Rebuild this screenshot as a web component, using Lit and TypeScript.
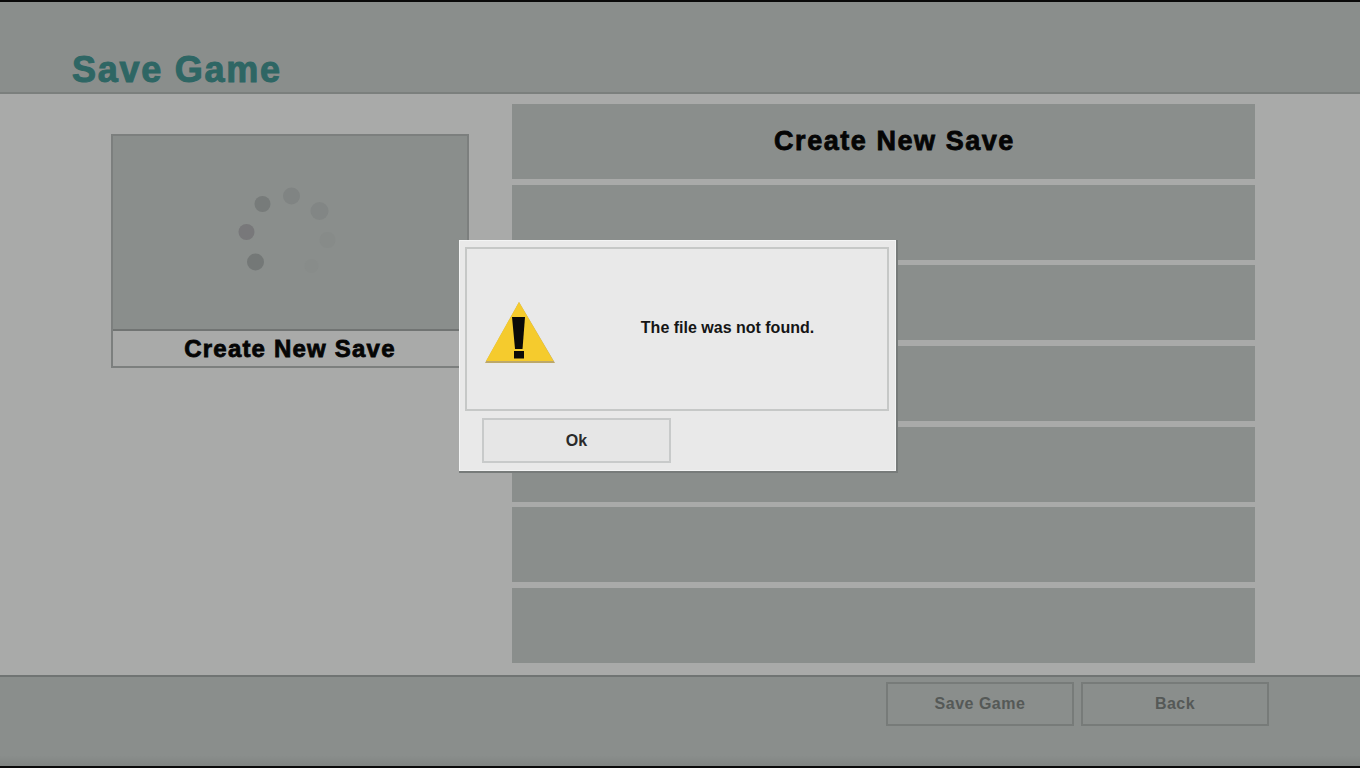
import { LitElement, html, svg, css } from "lit";
import { customElement } from "lit/decorators.js";

@customElement("app-root")
export class AppRoot extends LitElement {
  static styles = css`
    :host {
      display: block;
      width: 1360px;
      height: 768px;
      position: relative;
      overflow: hidden;
      font-family: "Liberation Sans", Arial, sans-serif;
      background: #a9aaa9;
    }
    .screen {
      display: flex;
      flex-direction: column;
      height: 768px;
      box-sizing: border-box;
      border-top: 2px solid #0a0a0a;
      border-bottom: 2px solid #0a0a0a;
    }
    .head {
      height: 92px;
      flex: none;
      box-sizing: border-box;
      background: #8a8e8c;
      border-bottom: 2px solid #7b7f7d;
      padding: 48px 0 0 72px;
    }
    .title {
      margin: 0;
      font-size: 36px;
      line-height: 40px;
      font-weight: 700;
      letter-spacing: 1.75px;
      color: #2e6664;
      -webkit-text-stroke: 1px #2e6664;
    }
    .main {
      flex: 1;
      display: flex;
      align-items: flex-start;
      padding: 10px 0 0 111px;
      background: #a9aaa9;
    }
    .card {
      width: 358px;
      height: 234px;
      flex: none;
      margin-top: 30px;
      box-sizing: border-box;
      border: 2px solid #7c7f7e;
      display: flex;
      flex-direction: column;
    }
    .preview {
      height: 193px;
      flex: none;
      background: #8a8e8c;
      border-bottom: 2px solid #717473;
      display: flex;
      align-items: center;
      justify-content: center;
    }
    .spinner {
      display: block;
      width: 125px;
      height: 110px;
      filter: blur(0.7px);
    }
    .caption {
      flex: 1;
      background: #a9aaa9;
      display: flex;
      align-items: center;
      justify-content: center;
    }
    .heavy {
      font-weight: 700;
      font-size: 24px;
      letter-spacing: 1.2px;
      -webkit-text-stroke: 0.8px #050505;
      color: #050505;
    }
    .list {
      margin-left: 43px;
      width: 743px;
      flex: none;
      display: flex;
      flex-direction: column;
      gap: 5.67px;
    }
    .row {
      height: 75px;
      flex: none;
      background: #8a8e8c;
      display: flex;
      align-items: center;
      justify-content: center;
      padding: 0 0 0 22px;
      box-sizing: border-box;
    }
    .row .heavy {
      font-size: 27px;
      letter-spacing: 1.55px;
    }
    .foot {
      height: 91px;
      flex: none;
      box-sizing: border-box;
      background: linear-gradient(#8a8e8c 0, #8a8e8c 88%, #808482 100%);
      border-top: 2px solid #707473;
      display: flex;
      justify-content: flex-end;
      gap: 7px;
      padding: 5px 91px 0 0;
    }
    .foot-btn {
      width: 188px;
      height: 44px;
      box-sizing: border-box;
      border: 2px solid #777b79;
      display: flex;
      align-items: center;
      justify-content: center;
      font-size: 16px;
      font-weight: 700;
      letter-spacing: 0.5px;
      color: #555957;
    }
    .dialog {
      position: absolute;
      left: 459px;
      top: 240px;
      width: 437px;
      height: 231px;
      box-sizing: border-box;
      background: #e9e9e9;
      border: 1px solid #f3f4f4;
      box-shadow: 1px 1px 0 1px #777b7a;
      padding: 6px 6px 0 5px;
      display: flex;
      flex-direction: column;
    }
    .msg {
      height: 164px;
      flex: none;
      box-sizing: border-box;
      border: 2px solid #c6c8c7;
      display: flex;
      align-items: center;
      padding: 0 0 0 17px;
    }
    .warn {
      display: block;
      width: 72px;
      height: 66px;
      flex: none;
      margin-top: 8px;
    }
    .msg-text {
      flex: 1;
      text-align: center;
      font-size: 16px;
      font-weight: 700;
      color: #151515;
      padding: 0 0 0 12px;
      margin-top: -2px;
    }
    .actions {
      padding: 7px 0 0 17px;
    }
    .ok {
      width: 189px;
      height: 45px;
      box-sizing: border-box;
      border: 2px solid #c8caca;
      background: #e6e6e6;
      font-family: inherit;
      font-size: 16px;
      font-weight: 700;
      color: #2a2a2a;
      padding: 0;
      display: block;
    }
  `;

  render() {
    const rows = ["Create New Save", "", "", "", "", "", ""];
    const dots: [number, number, number, string][] = [
      [66, 21, 8.5, "#808483"],
      [37, 29, 8, "#777b7a"],
      [21, 57, 8, "#78787a"],
      [30, 87, 8.5, "#747877"],
      [94, 36, 9, "#828685"],
      [102, 65, 8, "#878b89"],
      [86, 91, 7, "#888c8a"],
    ];
    return html`
      <div class="screen">
        <header class="head"><h1 class="title">Save Game</h1></header>
        <main class="main">
          <section class="card">
            <div class="preview">
              <svg class="spinner" viewBox="2.5 3 125 110" aria-hidden="true">
                ${dots.map(([x, y, r, c]) => svg`<circle cx=${x} cy=${y} r=${r} fill=${c}></circle>`)}
              </svg>
            </div>
            <div class="caption"><span class="heavy">Create New Save</span></div>
          </section>
          <section class="list">
            ${rows.map(
              (t) => html`<div class="row">${t ? html`<span class="heavy">${t}</span>` : ""}</div>`
            )}
          </section>
        </main>
        <footer class="foot">
          <div class="foot-btn">Save Game</div>
          <div class="foot-btn">Back</div>
        </footer>
      </div>
      <div class="dialog" role="alertdialog">
        <div class="msg">
          <svg class="warn" viewBox="0 0 72 66" aria-hidden="true">
            <path d="M35 2 L71 63 H1 Z" fill="#bda869"></path>
            <path d="M35 2 L69.5 61 H2 Z" fill="#f5cb2d"></path>
            <path d="M28 17 H41 L38.5 49 H31 Z" fill="#0b0a08"></path>
            <rect x="30" y="51" width="10" height="7.5" fill="#0b0a08"></rect>
          </svg>
          <div class="msg-text">The file was not found.</div>
        </div>
        <div class="actions"><button class="ok">Ok</button></div>
      </div>
    `;
  }
}
